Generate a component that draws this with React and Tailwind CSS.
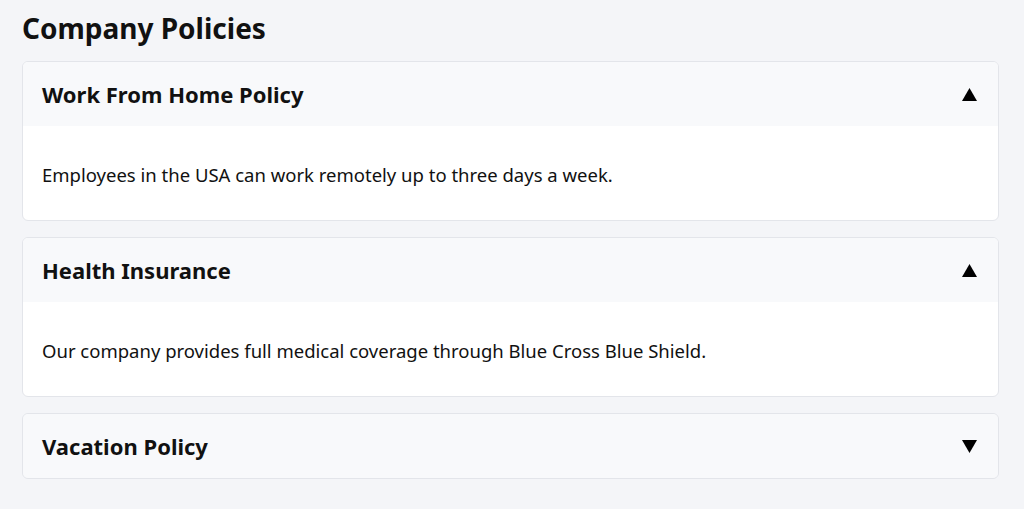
import React, { useState } from 'react';

const policies = [
  {
    title: 'Work From Home Policy',
    body: 'Employees in the USA can work remotely up to three days a week.',
  },
  {
    title: 'Health Insurance',
    body: 'Our company provides full medical coverage through Blue Cross Blue Shield.',
  },
  {
    title: 'Vacation Policy',
    body: 'Employees receive 20 days of paid vacation per year.',
  },
];

const App = () => {
  const [open, setOpen] = useState([true, true, false]);

  const toggle = (i) => {
    setOpen(open.map((v, j) => (j === i ? !v : v)));
  };

  return (
    <div
      className="min-h-screen bg-[#f4f5f8] pl-[22px] pr-[25px] pt-[12px] text-[#111]"
      style={{ fontFamily: '"Noto Sans", "Open Sans", sans-serif' }}
    >
      <h1 className="text-[28px] font-bold leading-[32px] mb-[17px]">Company Policies</h1>

      <div className="flex flex-col gap-[16px]">
        {policies.map((p, i) => (
          <div
            key={p.title}
            className="bg-white border border-[#e3e5ea] rounded-[6px] overflow-hidden"
          >
            <button
              onClick={() => toggle(i)}
              className="w-full flex items-center justify-between bg-[#f8f9fb] h-[64px] pl-[19px] pr-[20px] text-left"
            >
              <span className="text-[22px] font-bold">{p.title}</span>
              <svg width="15" height="13" viewBox="0 0 15 13" className="mr-[1px]">
                {open[i] ? (
                  <polygon points="7.5,0 15,13 0,13" fill="#000" />
                ) : (
                  <polygon points="0,0 15,0 7.5,13" fill="#000" />
                )}
              </svg>
            </button>
            {open[i] && (
              <div className="pl-[19px] pr-[20px] pt-[35px] pb-[32px] text-[18.5px] leading-[27px]">
                {p.body}
              </div>
            )}
          </div>
        ))}
      </div>
    </div>
  );
};

export default App;
